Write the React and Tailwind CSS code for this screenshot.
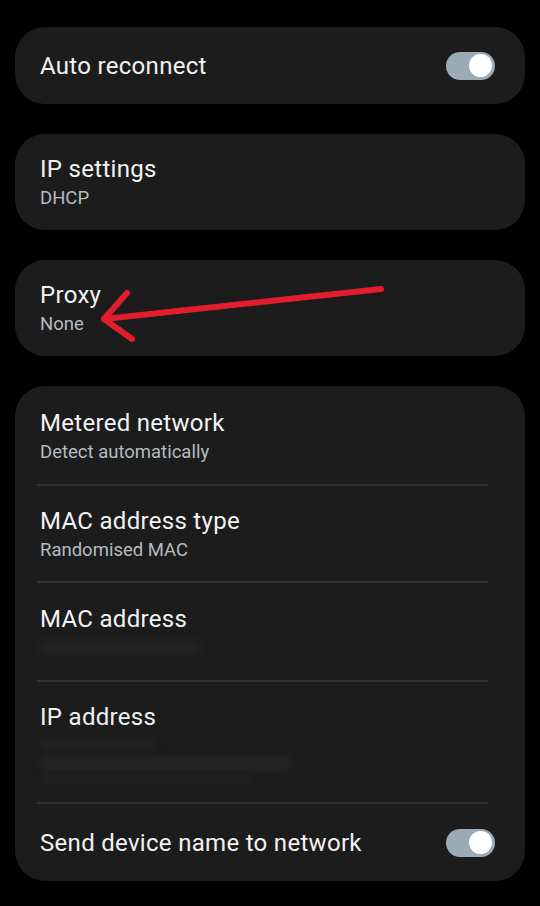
import React from 'react';

const Toggle = () => (
  <div className="w-[49px] h-[28px] rounded-full bg-[#9aabb5] flex items-center justify-end pr-[3px]">
    <div className="w-[23px] h-[23px] rounded-full bg-white" />
  </div>
);

const Title = ({ children }) => (
  <div className="text-[24px] leading-[28px] tracking-[0.3px] text-[#f2f2f2]">{children}</div>
);

const Row = ({ title, sub, className = '' }) => (
  <div className={`flex flex-col justify-center ${className}`}>
    <Title>{title}</Title>
    {sub && <div className="text-[18.5px] leading-[22px] text-[#b4bbc1] mt-[4px]">{sub}</div>}
  </div>
);

const Divider = () => <div className="h-[2px] bg-[#323232] ml-[22px] mr-[37px]" />;

export default function App() {
  return (
    <div
      className="w-[540px] h-[906px] bg-black px-[15px] pt-[27px] flex flex-col gap-[30px]"
      style={{ fontFamily: 'Roboto, "Noto Sans", sans-serif' }}
    >
      <div className="h-[77px] rounded-[30px] bg-[#1c1c1c] flex items-center justify-between pl-[25px] pr-[30px]">
        <Title>Auto reconnect</Title>
        <Toggle />
      </div>

      <div className="h-[96px] rounded-[30px] bg-[#1c1c1c] pl-[25px] flex items-center">
        <Row title="IP settings" sub="DHCP" />
      </div>

      <div className="relative h-[96px] rounded-[30px] bg-[#1c1c1c] pl-[25px] flex items-center">
        <Row title="Proxy" sub="None" />
        {/* red annotation arrow */}
        <svg className="absolute left-0 top-0" width="510" height="96" viewBox="0 0 510 96">
          <g stroke="#e11d2e" strokeWidth="6" strokeLinecap="round" strokeLinejoin="round" fill="none">
            <path d="M366 29 L89 59" />
            <path d="M112 33 L89 59 L117 79" />
          </g>
        </svg>
      </div>

      <div className="rounded-[30px] bg-[#1c1c1c] flex flex-col">
        <Row title="Metered network" sub="Detect automatically" className="h-[98px] pl-[25px] pt-[2px]" />
        <Divider />
        <Row title="MAC address type" sub="Randomised MAC" className="h-[95px] pl-[25px]" />
        <Divider />
        <div className="h-[97px] pl-[25px] pt-[22px]">
          <Title>MAC address</Title>
          <div className="mt-[6px] h-[16px] w-[160px] rounded bg-[#232323] blur-[3px]" />
        </div>
        <Divider />
        <div className="h-[120px] pl-[25px] pt-[21px]">
          <Title>IP address</Title>
          <div className="mt-[10px] flex flex-col gap-[5px]">
            <div className="h-[10px] w-[115px] rounded bg-[#232323] blur-[3px]" />
            <div className="h-[14px] w-[250px] rounded bg-[#252525] blur-[3px]" />
            <div className="h-[8px] w-[210px] rounded bg-[#222222] blur-[3px]" />
          </div>
        </div>
        <Divider />
        <div className="h-[77px] pl-[25px] pr-[30px] flex items-center justify-between">
          <Title>Send device name to network</Title>
          <Toggle />
        </div>
      </div>
    </div>
  );
}
